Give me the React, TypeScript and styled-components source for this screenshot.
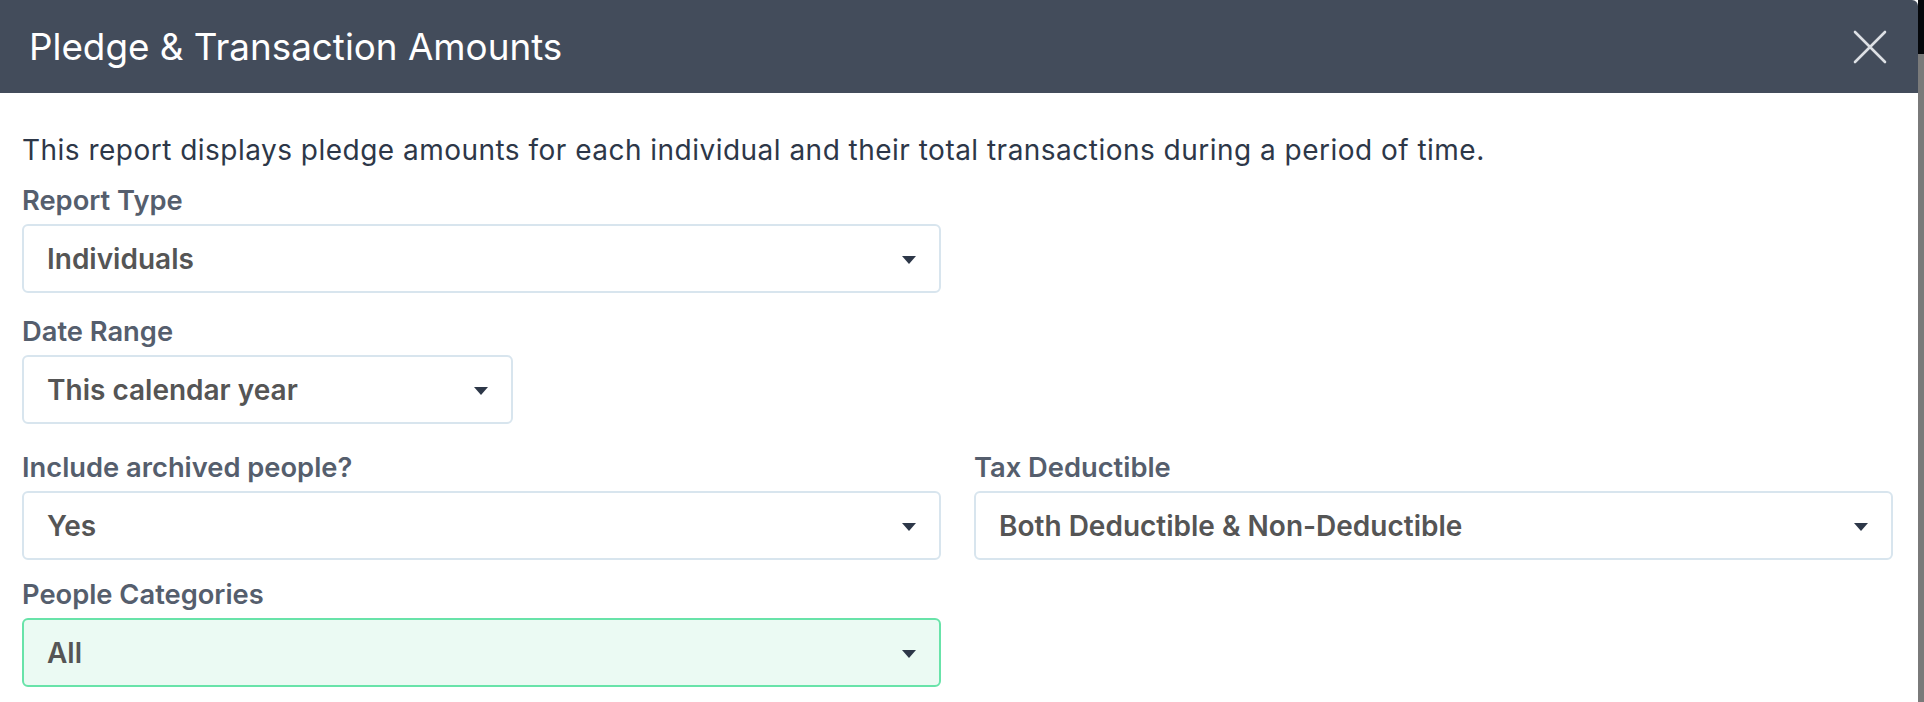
import React from 'react';
import styled, { createGlobalStyle } from 'styled-components';

const GlobalStyle = createGlobalStyle`
  html, body {
    margin: 0;
    padding: 0;
    background: #ffffff;
  }
  body {
    font-family: Inter, "Noto Sans", sans-serif;
  }
`;

interface Field {
  label: string;
  value: string;
  highlighted?: boolean;
  narrow?: boolean;
}

const Page = styled('div')`
  display: flex;
  width: 1924px;
  height: 702px;
  overflow: hidden;
`;

const Modal = styled('div')`
  width: 1918px;
  height: 702px;
  background: #ffffff;
  border-top-right-radius: 6px;
  overflow: hidden;
  flex-shrink: 0;
`;

const Backdrop = styled('div')`
  flex: 1;
  display: flex;
  flex-direction: column;
  background: #7a7a7a;
`;

const BackdropTop = styled('div')`
  height: 54px;
  background: #05070b;
`;

const Header = styled('div')`
  height: 93px;
  background: #434c5b;
  display: flex;
  align-items: center;
  justify-content: space-between;
  padding: 0 30px 0 29px;
  box-sizing: border-box;
`;

const Title = styled('h1')`
  margin: 0;
  font-family: Inter, "Noto Sans", sans-serif;
  font-weight: 400;
  font-size: 36.8px;
  color: #ffffff;
`;

const CloseButton = styled('button')`
  border: 0;
  background: transparent;
  padding: 0;
  width: 36px;
  height: 36px;
  display: flex;
  align-items: center;
  justify-content: center;
  cursor: pointer;
`;

const Body = styled('div')`
  padding: 0 25px 0 22px;
`;

const Description = styled('p')`
  margin: 0;
  padding-top: 40px;
  font-size: 28px;
  line-height: 34px;
  letter-spacing: 0.48px;
  color: #2d3748;
`;

const Grid = styled('div')`
  display: grid;
  grid-template-columns: 1fr 1fr;
  column-gap: 33px;
`;

const Group = styled('div')<{ $top: number }>`
  padding-top: ${(p) => p.$top}px;
`;

const Label = styled('label')`
  display: block;
  font-size: 27.3px;
  line-height: 34px;
  font-weight: 600;
  color: #555e6d;
  margin-bottom: 6px;
`;

const Select = styled('div')<{ $highlighted?: boolean; $narrow?: boolean }>`
  box-sizing: border-box;
  height: 69px;
  width: ${(p) => (p.$narrow ? '491px' : '100%')};
  border: 2px solid ${(p) => (p.$highlighted ? '#68e3a9' : '#d8e5ee')};
  background: ${(p) => (p.$highlighted ? '#ebfaf3' : '#ffffff')};
  border-radius: 6px;
  display: flex;
  align-items: center;
  justify-content: space-between;
  padding: 0 23px 0 23px;
`;

const SelectValue = styled('span')`
  font-size: 28px;
  font-weight: 600;
  color: #555555;
`;

const Caret = styled('span')`
  width: 0;
  height: 0;
  border-left: 7px solid transparent;
  border-right: 7px solid transparent;
  border-top: 8px solid #2d3748;
  margin-top: 2px;
`;

const SelectField: React.FC<{ field: Field }> = ({ field }) => (
  <>
    <Label>{field.label}</Label>
    <Select $highlighted={field.highlighted} $narrow={field.narrow}>
      <SelectValue>{field.value}</SelectValue>
      <Caret />
    </Select>
  </>
);

const App: React.FC = () => (
  <Page>
    <GlobalStyle />
    <Modal>
      <Header>
        <Title>Pledge &amp; Transaction Amounts</Title>
        <CloseButton aria-label="Close">
          <svg width="34" height="34" viewBox="0 0 34 34">
            <path d="M2 2 L32 32 M32 2 L2 32" stroke="#dde0e5" strokeWidth="2.6" strokeLinecap="round" />
          </svg>
        </CloseButton>
      </Header>
      <Body>
        <Description>
          This report displays pledge amounts for each individual and their total transactions during a period of time.
        </Description>
        <Grid>
          <Group $top={17}>
            <SelectField field={{ label: 'Report Type', value: 'Individuals' }} />
          </Group>
          <div />
          <Group $top={22}>
            <SelectField field={{ label: 'Date Range', value: 'This calendar year', narrow: true }} />
          </Group>
          <div />
          <Group $top={27}>
            <SelectField field={{ label: 'Include archived people?', value: 'Yes' }} />
          </Group>
          <Group $top={27}>
            <SelectField field={{ label: 'Tax Deductible', value: 'Both Deductible & Non-Deductible' }} />
          </Group>
          <Group $top={18}>
            <SelectField field={{ label: 'People Categories', value: 'All', highlighted: true }} />
          </Group>
        </Grid>
      </Body>
    </Modal>
    <Backdrop>
      <BackdropTop />
    </Backdrop>
  </Page>
);

export default App;
